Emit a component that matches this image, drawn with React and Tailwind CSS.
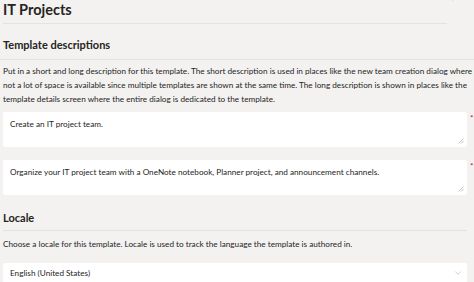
import { ChevronDown } from 'lucide-react';

function Resize() {
  return (
    <svg className="absolute bottom-[3px] right-[3px]" width="6" height="6" viewBox="0 0 6 6">
      <path d="M5.5 0.5 L0.5 5.5 M5.5 3 L3 5.5" stroke="#b0aeac" strokeWidth="0.7" />
    </svg>
  );
}

function TextBox({ text }) {
  return (
    <div className="flex items-start">
      <div className="relative w-[464px] h-[35px] bg-white rounded-[2px] px-[7px] pt-[5px] text-[8.2px] leading-[14px] text-[#252423] whitespace-nowrap">
        {text}
        <Resize />
      </div>
      <span className="ml-[3px] mt-[2px] text-[8px] leading-[8px] text-[#a4262c]">*</span>
    </div>
  );
}

export default function App() {
  return (
    <div className="w-[474px] h-[282px] overflow-hidden bg-[#f3f2f1] text-[#252423] relative" style={{ fontFamily: 'Lato, "Noto Sans", sans-serif' }}>
      <span className="absolute left-[451px] top-[-3px] text-[8px] leading-[8px] text-[#a4262c]">*</span>
      <div className="pl-[3px]">
        <div className="w-[444px] border-b border-[#e4e2e0] h-[24px] pt-[1px]">
          <h1 className="text-[14.5px] leading-[18px] font-bold">IT Projects</h1>
        </div>
      </div>
      <div className="pl-[3px] pt-[13px] border-b border-[#e4e2e0] h-[36px]">
        <h2 className="text-[11px] leading-[16px] font-bold">Template descriptions</h2>
      </div>
      <div className="pl-[3px] pt-[4px]">
        <p className="text-[8.2px] leading-[14px] whitespace-nowrap">
          Put in a short and long description for this template. The short description is used in places like the new team creation dialog where
          <br />
          not a lot of space is available since multiple templates are shown at the same time. The long description is shown in places like the
          <br />
          template details screen where the entire dialog is dedicated to the template.
        </p>
        <div className="mt-[6px] flex flex-col gap-[13px]">
          <TextBox text="Create an IT project team." />
          <TextBox text="Organize your IT project team with a OneNote notebook, Planner project, and announcement channels." />
        </div>
        <div className="w-[464px] border-b border-[#e4e2e0] mt-[15px] pb-[4px]">
          <h2 className="text-[11px] leading-[16px] font-bold">Locale</h2>
        </div>
        <p className="mt-[6px] text-[8.2px] leading-[14px]">
          Choose a locale for this template. Locale is used to track the language the template is authored in.
        </p>
        <div className="mt-[12px] w-[464px] h-[20px] bg-white rounded-[2px] flex items-center justify-between pl-[7px] pr-[4px] text-[8.2px]">
          <span>English (United States)</span>
          <ChevronDown size={10} strokeWidth={1.2} color="#a19f9d" />
        </div>
      </div>
    </div>
  );
}
